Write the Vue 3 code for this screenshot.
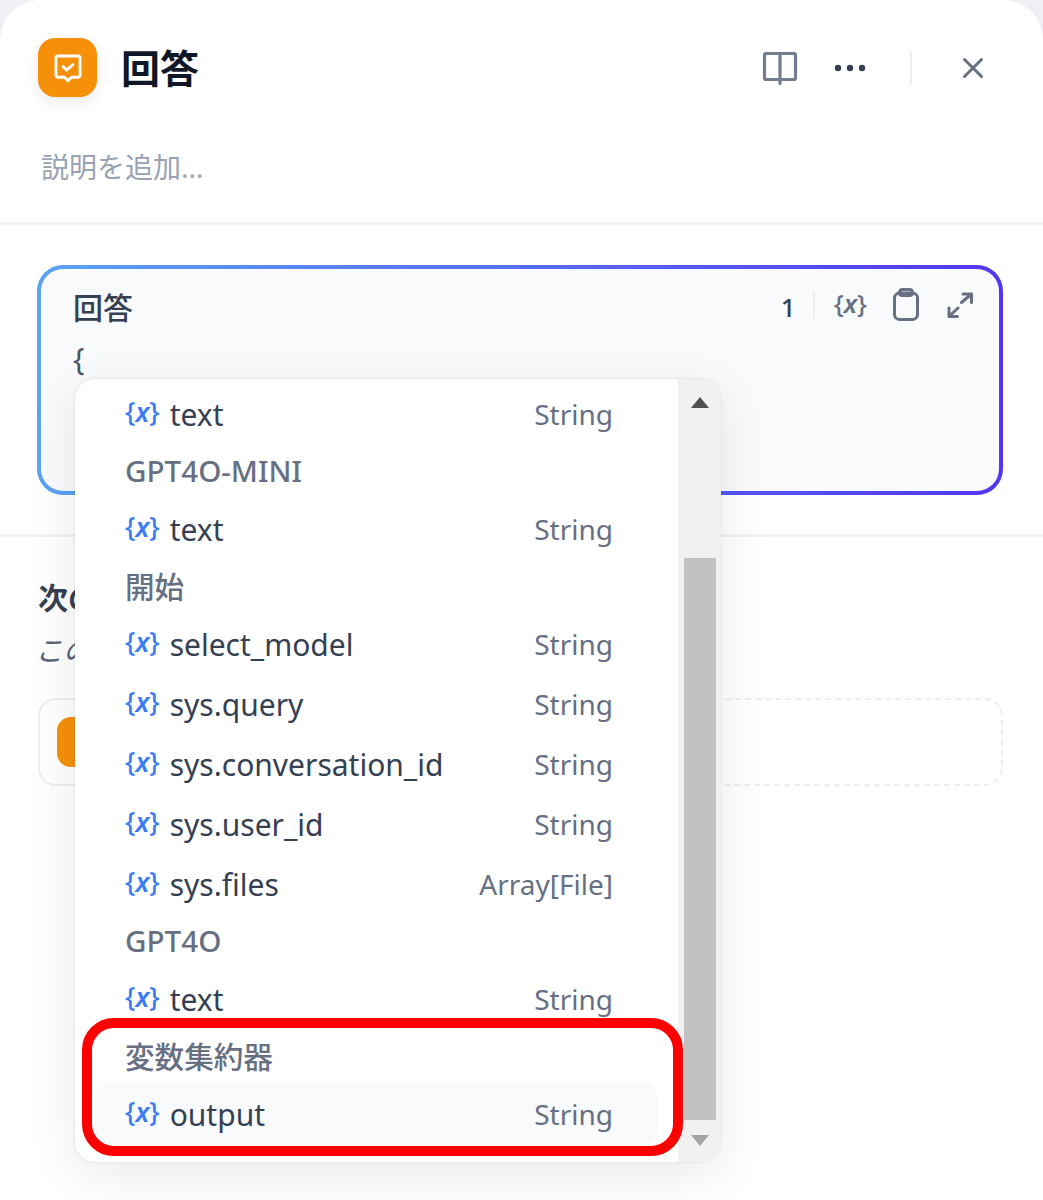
<script setup>
const rows = [
  { v: 'text', t: 'String', h: 60 },
  { g: 'GPT4O-MINI', h: 55 },
  { v: 'text', t: 'String', h: 60 },
  { g: '開始', h: 55 },
  { v: 'select_model', t: 'String', h: 60 },
  { v: 'sys.query', t: 'String', h: 60 },
  { v: 'sys.conversation_id', t: 'String', h: 60 },
  { v: 'sys.user_id', t: 'String', h: 60 },
  { v: 'sys.files', t: 'Array[File]', h: 60 },
  { g: 'GPT4O', h: 55 },
  { v: 'text', t: 'String', h: 60 },
  { g: '変数集約器', h: 55 },
  { v: 'output', t: 'String', h: 64, hover: true }
]
</script>

<template>
  <div class="page">
    <div class="panel">
      <header class="head">
        <div class="title-row">
          <div class="node-icon">
            <svg viewBox="0 0 24 24" width="34" height="34" fill="none" stroke="#fff" stroke-width="2" stroke-linejoin="round" stroke-linecap="round">
              <path d="M5 3.500h14a1.500 1.500 0 0 1 1.500 1.500v12a1.500 1.500 0 0 1-1.500 1.500h-4.500l-2.500 2.500-2.500-2.500H5A1.500 1.500 0 0 1 3.500 17V5A1.500 1.500 0 0 1 5 3.500z"/>
              <path d="M8.500 11l2.500 2.500 4.500-4"/>
            </svg>
          </div>
          <h1 class="title">回答</h1>
          <div class="tools">
            <svg class="book" viewBox="0 0 36 36" width="36" height="36" fill="none" stroke="#737c90" stroke-width="3.200" stroke-linejoin="round" stroke-linecap="round">
              <path d="M4 3.500h28a1.500 1.500 0 0 1 1.500 1.500v23a1.500 1.500 0 0 1-1.500 1.500H4A1.500 1.500 0 0 1 2.500 28V5A1.500 1.500 0 0 1 4 3.500zM18 3.500v30"/>
            </svg>
            <svg class="dots" viewBox="0 0 32 8" width="32" height="8" fill="#354052">
              <circle cx="4" cy="4" r="3.200"/><circle cx="16" cy="4" r="3.200"/><circle cx="28" cy="4" r="3.200"/>
            </svg>
            <span class="tool-sep"></span>
            <svg class="close" viewBox="0 0 24 24" width="24" height="24" fill="none" stroke="#676f83" stroke-width="3" stroke-linecap="round">
              <path d="M3.500 3.500l17 17M20.500 3.500l-17 17"/>
            </svg>
          </div>
        </div>
        <p class="desc">説明を追加...</p>
      </header>

      <section class="answer-sec">
        <div class="answer-box">
          <div class="answer-inner">
            <div class="answer-top">
              <span class="answer-label">回答</span>
              <div class="answer-tools">
                <span class="count">1</span>
                <span class="mini-sep"></span>
                <span class="var-glyph grey">{<i>x</i>}</span>
                <svg class="clip" viewBox="0 0 26 33" width="26" height="33" fill="none" stroke="#676f83" stroke-width="3" stroke-linejoin="round">
                  <rect x="1.500" y="5" width="23" height="26.500" rx="5"/>
                  <path d="M6.500 5c0-2 1-3.500 3-3.500h7c2 0 3 1.500 3 3.500s-1 2.500-3 2.500h-7c-2 0-3-.5-3-2.500z"/>
                </svg>
                <svg class="expand" viewBox="0 0 26 26" width="26" height="26" fill="none" stroke="#676f83" stroke-width="3" stroke-linecap="round" stroke-linejoin="round">
                  <path d="M14.500 10.500L24.500 2M16 2h8.500v8.500M11 16L2 24.500M2 16v8.500h8.500"/>
                </svg>
              </div>
            </div>
            <div class="brace">{</div>
          </div>
        </div>
      </section>

      <section class="next-sec">
        <h2 class="next-title">次の</h2>
        <p class="next-sub">この</p>
        <div class="next-row">
          <div class="next-card"><span class="next-icon"></span></div>
          <div class="next-dashed"></div>
        </div>
      </section>

      <div class="dropdown">
        <div class="list">
          <template v-for="(r, i) in rows" :key="i">
            <div v-if="r.g" class="group" :style="{ height: r.h + 'px' }">{{ r.g }}</div>
            <div v-else class="item" :class="{ hover: r.hover }" :style="{ height: r.h + 'px' }">
              <span class="var-glyph">{<i>x</i>}</span>
              <span class="name">{{ r.v }}</span>
              <span class="type">{{ r.t }}</span>
            </div>
          </template>
        </div>
        <div class="scrollbar">
          <span class="arrow up"></span>
          <span class="track"><span class="thumb"></span></span>
          <span class="arrow down"></span>
        </div>
      </div>

      <div class="highlight"></div>
    </div>
  </div>
</template>

<style>
html, body { margin: 0; background: #fff; }
</style>

<style scoped>
.page {
  width: 1043px;
  height: 1200px;
  overflow: hidden;
  background: #eef0f4;
  font-family: "Noto Sans", "Noto Sans CJK JP", sans-serif;
}
.panel {
  position: relative;
  height: 1200px;
  background: #fff;
  border-top-left-radius: 40px;
  border-top-right-radius: 40px;
  box-sizing: border-box;
}
.head {
  height: 225px;
  box-sizing: border-box;
  padding: 38px 40px 0 38px;
  border-bottom: 3px solid #f0f1f3;
}
.title-row { display: flex; align-items: center; height: 59px; }
.node-icon {
  width: 59px;
  height: 59px;
  border-radius: 17px;
  background: #f79009;
  box-shadow: 0 6px 14px rgba(16, 24, 40, .08);
  display: flex;
  align-items: center;
  justify-content: center;
  flex: none;
}
.title {
  margin: 0 0 0 24px;
  font-size: 39px;
  line-height: 59px;
  font-weight: 700;
  color: #101828;
}
.tools { margin-left: auto; display: flex; align-items: center; }
.book { margin-right: 36px; }
.dots { margin-right: 44px; }
.tool-sep { width: 2px; height: 34px; background: #eceef1; margin-right: 49px; }
.close { margin-right: 18px; }
.desc {
  margin: 50px 0 0 3px;
  font-size: 28px;
  line-height: 40px;
  color: #98a2b2;
}
.answer-sec {
  height: 312px;
  box-sizing: border-box;
  padding: 40px 40px 0 37px;
  border-bottom: 3px solid #f0f1f3;
}
.answer-box {
  height: 230px;
  box-sizing: border-box;
  padding: 4px;
  border-radius: 26px;
  background: linear-gradient(90deg, #5ba3f5 0%, #5336f0 100%);
}
.answer-inner {
  height: 100%;
  box-sizing: border-box;
  padding: 16px 26px 0 32px;
  border-radius: 22px;
  background: #f9fafb;
}
.answer-top { display: flex; align-items: center; justify-content: space-between; height: 40px; }
.answer-label { margin-top: 2px; font-size: 30px; font-weight: 500; color: #354052; }
.answer-tools { display: flex; align-items: center; }
.count { margin-top: 4px; font-size: 26px; font-weight: 500; color: #354052; }
.mini-sep { width: 2px; height: 28px; background: #eceef1; margin: 0 19px 0 17px; }
.clip { margin: -2px 0 0 27px; }
.expand { margin-left: 28px; }
.var-glyph {
  font-size: 27px;
  letter-spacing: -1px;
  font-weight: 500;
  color: #3b7cf5;
  white-space: nowrap;
}
.var-glyph i { font-weight: 600; padding: 0 1px; }
.var-glyph.grey { margin-top: -4px; font-size: 26px; color: #676f83; }
.brace { margin-top: 16px; font-size: 30px; line-height: 36px; color: #495464; }
.next-sec { padding: 41px 40px 0 38px; }
.next-title { margin: 0; font-size: 30px; line-height: 40px; font-weight: 700; color: #354052; }
.next-sub { margin: 14px 0 0 -3px; font-size: 28px; line-height: 36px; font-style: italic; color: #596377; }
.next-row { display: flex; margin-top: 30px; gap: 20px; }
.next-card {
  width: 100px;
  height: 88px;
  box-sizing: border-box;
  border: 2px solid #eceef1;
  border-radius: 18px;
  padding: 17px;
  background: #fff;
}
.next-icon { display: block; width: 50px; height: 50px; border-radius: 14px; background: #f79009; }
.next-dashed {
  flex: 1;
  height: 88px;
  box-sizing: border-box;
  border: 2px dashed #eceef1;
  border-radius: 18px;
}
.dropdown {
  position: absolute;
  left: 75px;
  top: 379px;
  width: 646px;
  height: 783px;
  display: flex;
  overflow: hidden;
  border-radius: 20px;
  background: #fff;
  box-shadow: 0 0 2px rgba(16, 24, 40, .16), 0 12px 50px rgba(16, 24, 40, .09);
}
.list {
  flex: 1;
  padding: 5px 20px 0 20px;
  box-sizing: border-box;
  min-width: 0;
}
.group {
  display: flex;
  align-items: center;
  box-sizing: border-box;
  padding: 0 0 2px 30px;
  font-size: 29.6px;
  font-weight: 500;
  color: #676f83;
}
.item {
  display: flex;
  align-items: center;
  padding: 0 45px 0 30px;
  font-size: 30px;
  color: #354052;
  border-radius: 16px;
}
.item.hover { margin-top: -2px; background: #f9fafb; }
.item .var-glyph { margin: -6px 11px 0 0; }
.name { flex: 1; }
.type { font-size: 28px; color: #676f83; }
.scrollbar {
  width: 43px;
  flex: none;
  display: flex;
  flex-direction: column;
  align-items: center;
  background: #f1f1f1;
}
.arrow { flex: none; width: 0; height: 0; border-left: 9px solid transparent; border-right: 9px solid transparent; }
.arrow.up { border-bottom: 11px solid #505050; margin: 18px 0 0; }
.arrow.down { border-top: 11px solid #a3a3a3; margin: 15px 0 16px; }
.track { flex: 1; width: 100%; display: flex; flex-direction: column; justify-content: flex-end; align-items: center; }
.thumb { width: 32px; height: 562px; background: #c1c1c1; }
.highlight {
  position: absolute;
  left: 82px;
  top: 1018px;
  width: 601px;
  height: 138px;
  box-sizing: border-box;
  border: 10px solid #ff0000;
  border-radius: 32px;
}
</style>
